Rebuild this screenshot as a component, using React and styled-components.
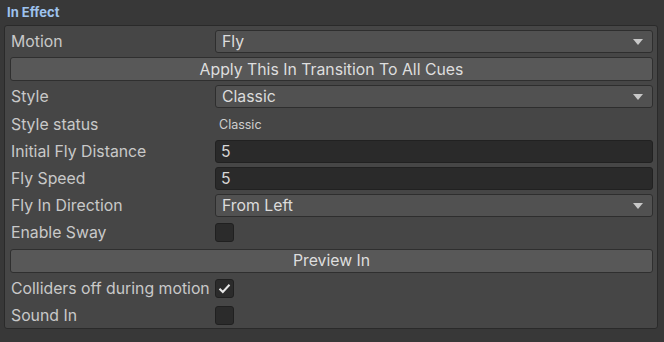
import React from 'react'
import styled, { createGlobalStyle } from 'styled-components'

const Global = createGlobalStyle`
    html, body {
        margin: 0;
        padding: 0;
        background: #383838;
    }
    body {
        font-family: Inter, "Noto Sans", sans-serif;
    }
`;

const Page = styled.div`
    width: 664px;
    height: 342px;
    box-sizing: border-box;
    padding: 3px 6px 0 4px;
    background: #383838;
`;

const Header = styled.div`
    height: 22px;
    padding-left: 3px;
    font-size: 13px;
    font-weight: 700;
    line-height: 18px;
    color: #9ec3ee;
`;

const Panel = styled.div`
    box-sizing: border-box;
    width: 654px;
    height: 304px;
    display: flex;
    flex-direction: column;
    gap: 4.2px;
    padding: 4px 4px 0 5px;
    background: #464646;
    border: 1px solid #2a2a2a;
    border-radius: 3px;
`;

const Row = styled.div`
    display: grid;
    grid-template-columns: 205px 1fr;
    align-items: center;
    height: 23px;
`;

const Label = styled.span`
    padding-left: 1px;
    font-size: 15.8px;
    color: #c9c9c9;
    white-space: nowrap;
`;

const Dropdown = styled.div`
    box-sizing: border-box;
    height: 23px;
    display: flex;
    align-items: center;
    justify-content: space-between;
    padding: 0 9px 0 6px;
    background: #515151;
    border: 1px solid #2e2e2e;
    border-radius: 3px;
    font-size: 15.8px;
    color: #dcdcdc;
`;

const Arrow = styled.span`
    width: 0;
    height: 0;
    border-left: 5px solid transparent;
    border-right: 5px solid transparent;
    border-top: 6px solid #c8c8c8;
`;

const Field = styled.div`
    box-sizing: border-box;
    height: 23px;
    display: flex;
    align-items: center;
    padding-left: 5px;
    background: #2a2a2a;
    border: 1px solid #212121;
    border-radius: 3px;
    font-size: 15.8px;
    color: #d6d6d6;
`;

const Value = styled.span`
    padding-left: 4px;
    font-size: 12.5px;
    color: #cfcfcf;
`;

const Button = styled.div`
    box-sizing: border-box;
    height: 24px;
    display: flex;
    align-items: center;
    justify-content: center;
    background: #585858;
    border: 1px solid #2f2f2f;
    border-radius: 3px;
    font-size: 15.8px;
    color: #dedede;
`;

const Check = styled.div`
    box-sizing: border-box;
    width: 19px;
    height: 19px;
    display: flex;
    align-items: center;
    justify-content: center;
    background: #2b2b2b;
    border: 1px solid #202020;
    border-radius: 3px;
`;

const Select = ({ value }) => (
    <Dropdown>
        {value}
        <Arrow />
    </Dropdown>
)

const Box = ({ checked }) => (
    <Check>
        {checked && (
            <svg width="13" height="11" viewBox="0 0 13 11">
                <path d="M1.5 5.8 L4.8 9 L11.5 1.8" fill="none" stroke="#e8e8e8" strokeWidth="2" />
            </svg>
        )}
    </Check>
)

const App = () => {
    return (
        <Page>
            <Global />
            <Header>In Effect</Header>
            <Panel>
                <Row>
                    <Label>Motion</Label>
                    <Select value="Fly" />
                </Row>
                <Button>Apply This In Transition To All Cues</Button>
                <Row>
                    <Label>Style</Label>
                    <Select value="Classic" />
                </Row>
                <Row>
                    <Label>Style status</Label>
                    <Value>Classic</Value>
                </Row>
                <Row>
                    <Label>Initial Fly Distance</Label>
                    <Field>5</Field>
                </Row>
                <Row>
                    <Label>Fly Speed</Label>
                    <Field>5</Field>
                </Row>
                <Row>
                    <Label>Fly In Direction</Label>
                    <Select value="From Left" />
                </Row>
                <Row>
                    <Label>Enable Sway</Label>
                    <Box />
                </Row>
                <Button>Preview In</Button>
                <Row>
                    <Label>Colliders off during motion</Label>
                    <Box checked />
                </Row>
                <Row>
                    <Label>Sound In</Label>
                    <Box />
                </Row>
            </Panel>
        </Page>
    )
}

export default App
